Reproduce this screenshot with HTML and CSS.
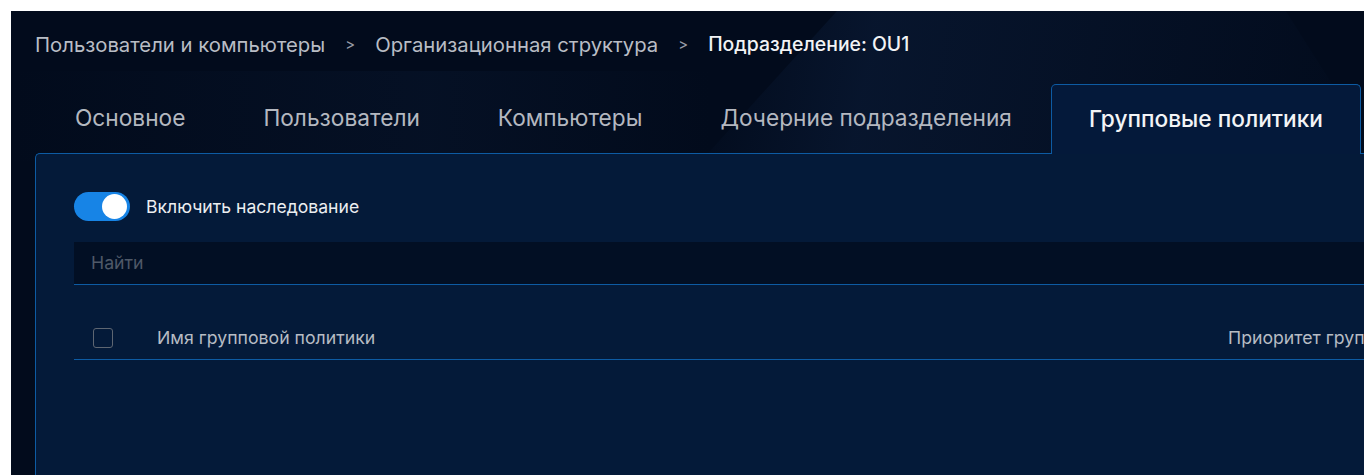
FILE: index.html
```html
<!DOCTYPE html>
<html lang="ru">
<head>
<meta charset="utf-8">
<title>Подразделение: OU1</title>
<link rel="stylesheet" href="styles.css">
</head>
<body>
<div class="app">
  <div class="glow glow-a"></div>
  <div class="glow glow-b"></div>
  <nav class="crumbs">
    <span class="crumb">Пользователи и компьютеры</span>
    <span class="sep">&gt;</span>
    <span class="crumb">Организационная структура</span>
    <span class="sep">&gt;</span>
    <span class="crumb current">Подразделение: OU1</span>
  </nav>
  <div class="tabs">
    <div class="tab">Основное</div>
    <div class="tab">Пользователи</div>
    <div class="tab">Компьютеры</div>
    <div class="tab">Дочерние подразделения</div>
    <div class="tab active">Групповые политики</div>
  </div>
  <section class="panel">
    <label class="switch-row">
      <span class="switch"><span class="knob"></span></span>
      <span class="switch-label">Включить наследование</span>
    </label>
    <div class="search">
      <input class="search-input" type="text" placeholder="Найти">
    </div>
    <div class="thead">
      <span class="check"></span>
      <span class="col-name">Имя групповой политики</span>
      <span class="col-prio">Приоритет групповой политики</span>
    </div>
  </section>
</div>
</body>
</html>
```
FILE: styles.css
```css
html, body {
  margin: 0;
  height: 100%;
  background: #ffffff;
  overflow: hidden;
}

body {
  padding: 11px 0 0 11px;
  box-sizing: border-box;
  font-family: Inter, "Liberation Sans", Arial, sans-serif;
}

.app {
  position: relative;
  width: 1480px;
  height: 100%;
  background: #020b1c;
  display: flex;
  flex-direction: column;
  overflow: hidden;
}

/* faint diagonal light planes in the backdrop */
.glow {
  position: absolute;
  pointer-events: none;
}
.glow-a {
  left: 690px;
  top: 0;
  width: 680px;
  height: 150px;
  background: linear-gradient(100deg, rgba(20, 45, 85, 0) 0%, rgba(20, 45, 85, 0.3) 25%, rgba(16, 38, 74, 0.15) 70%, rgba(16, 38, 74, 0) 100%);
  clip-path: polygon(20% 0, 86% 0, 100% 100%, 0 100%);
}
.glow-b {
  left: 0;
  top: 60px;
  width: 700px;
  height: 90px;
  background: linear-gradient(90deg, rgba(14, 32, 62, 0) 0%, rgba(14, 32, 62, 0.25) 60%, rgba(14, 32, 62, 0) 100%);
}

.crumbs {
  position: relative;
  display: flex;
  align-items: center;
  gap: 20px;
  padding: 21px 0 0 24px;
  height: 24px;
  font-size: 20.3px;
  color: #b9bdc5;
  white-space: nowrap;
}
.sep {
  font-size: 15px;
  color: #979da7;
}
.crumb.current {
  color: #f2f3f5;
  font-size: 19.4px;
  font-weight: 500;
}

.tabs {
  position: relative;
  z-index: 1;
  display: flex;
  margin: 28px 0 0 25px;
  height: 69px;
  white-space: nowrap;
}
.tab {
  display: flex;
  align-items: center;
  padding: 0 39px 2px;
  font-size: 22.7px;
  color: #b4b8c0;
}
.tab.active {
  color: #f3f4f6;
  font-weight: 500;
  padding: 0 37px 2px;
  margin-bottom: -1px;
  background: #04193a;
  border: 1px solid #0d5ba3;
  border-bottom: none;
  border-radius: 5px 5px 0 0;
}

.panel {
  position: relative;
  flex: 1;
  margin-left: 24px;
  padding: 37px 0 0 38px;
  background: #041a39;
  border-top: 1px solid #0d5ba3;
  border-left: 1px solid #0d5ba3;
  border-top-left-radius: 5px;
}

.switch-row {
  display: flex;
  align-items: center;
  gap: 16px;
  height: 30px;
}
.switch {
  display: flex;
  align-items: center;
  justify-content: flex-end;
  width: 56px;
  height: 29px;
  padding: 0 3px;
  box-sizing: border-box;
  border-radius: 15px;
  background: #1784e6;
}
.knob {
  width: 25px;
  height: 25px;
  border-radius: 50%;
  background: #ffffff;
}
.switch-label {
  font-size: 17.6px;
  color: #eceef1;
}

.search {
  margin-top: 21px;
  height: 42px;
  background: #020f24;
  border-bottom: 1px solid #0d5ba3;
  display: flex;
  align-items: center;
}
.search-input {
  flex: 1;
  background: transparent;
  border: none;
  outline: none;
  padding: 0 0 2px 17px;
  font-family: inherit;
  font-size: 17.7px;
  color: #e0e3e8;
}
.search-input::placeholder {
  color: #4f5968;
}

.thead {
  display: flex;
  align-items: center;
  height: 75px;
  padding-top: 31px;
  box-sizing: border-box;
  border-bottom: 1px solid #0d5ba3;
  white-space: nowrap;
}
.check {
  flex: none;
  width: 18px;
  height: 18px;
  margin-left: 19px;
  border: 1px solid #5e6672;
  border-radius: 3px;
}
.col-name {
  flex: 1;
  margin-left: 44px;
  font-size: 17.7px;
  color: #b7bcc4;
}
.col-prio {
  flex: none;
  width: 230px;
  margin-right: 33px;
  font-size: 17.7px;
  color: #b7bcc4;
}
```
